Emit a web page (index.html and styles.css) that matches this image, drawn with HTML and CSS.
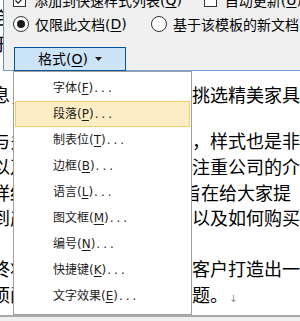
FILE: index.html
```html
<!DOCTYPE html>
<html lang="zh-CN">
<head>
<meta charset="utf-8">
<title>样式修改</title>
<link rel="stylesheet" href="styles.css">
</head>
<body>
<div class="page">
  <div class="doc">
    <div class="line"><span class="l">会，多家</span><span class="r">品牌资料介绍</span></div>
    <div class="line"><span class="l">于，家居</span><span class="r">设计风格介绍</span></div>
    <div class="line"></div>
    <div class="line"><span class="l">息，为您</span><span class="r">挑选精美家具</span></div>
    <div class="line gap"></div>
    <div class="line"><span class="l">与多家厂</span><span class="r">，样式也是非</span></div>
    <div class="line"><span class="l">以及更加</span><span class="r">注重公司的介</span></div>
    <div class="line"><span class="l">详细介绍</span><span class="r r-cut">旨在给大家提</span></div>
    <div class="line"><span class="l">到产品的</span><span class="r">以及如何购买</span></div>
    <div class="line"></div>
    <div class="line"><span class="l">终将为每</span><span class="r">客户打造出一</span></div>
    <div class="line"><span class="l">项问题等</span><span class="r">题。<span class="pmark">↓</span></span></div>
  </div>

  <div class="dialog">
    <div class="row row1">
      <label class="opt opt-a"><span class="cb"><svg viewBox="0 0 13 13" width="13" height="13"><path d="M2.5 6.5 L5.2 9.2 L10.5 3.4" fill="none" stroke="#1a1a1a" stroke-width="1.2"/></svg></span>添加到快速样式列表(<u>Q</u>)</label>
      <label class="opt"><span class="cb"></span>自动更新(<u>U</u>)</label>
    </div>
    <div class="row row2">
      <label class="opt opt-b"><span class="radio on"></span>仅限此文档(<u>D</u>)</label>
      <label class="opt"><span class="radio"></span>基于该模板的新文档</label>
    </div>
    <div class="row row3">
      <button class="fmt">格式(<u>O</u>)<svg class="caret" viewBox="0 0 7 4" width="7" height="4"><path d="M0 0 H7 L3.5 4 Z" fill="#1a1a1a"/></svg></button>
    </div>
  </div>

  <div class="menu">
    <div class="item">字体(<u>F</u>)<span class="dots">...</span></div>
    <div class="item hover">段落(<u>P</u>)<span class="dots">...</span></div>
    <div class="item">制表位(<u>T</u>)<span class="dots">...</span></div>
    <div class="item">边框(<u>B</u>)<span class="dots">...</span></div>
    <div class="item">语言(<u>L</u>)<span class="dots">...</span></div>
    <div class="item">图文框(<u>M</u>)<span class="dots">...</span></div>
    <div class="item">编号(<u>N</u>)<span class="dots">...</span></div>
    <div class="item">快捷键(<u>K</u>)<span class="dots">...</span></div>
    <div class="item">文字效果(<u>E</u>)<span class="dots">...</span></div>
  </div>

  <div class="status"></div>
</div>
</body>
</html>
```

FILE: styles.css
```css
html, body {
  margin: 0;
  padding: 0;
}
body {
  background: #ffffff;
}
.page {
  position: relative;
  width: 300px;
  height: 321px;
  overflow: hidden;
  background: #ffffff;
  font-family: "DejaVu Sans", "Noto Sans CJK SC", sans-serif;
}

/* document behind */
.doc {
  padding-top: 5px;
  color: #000;
  font-size: 18px;
  font-family: "Noto Sans CJK SC", sans-serif;
}
.line {
  display: grid;
  grid-template-columns: 192px 1fr;
  height: 25.6px;
  line-height: 25.6px;
  white-space: nowrap;
}
.line.gap {
  height: 21px;
}
.l {
  margin-left: -8px;
}
.r-cut {
  margin-left: -9px;
}
.pmark {
  color: #8c8c8c;
  font-size: 10px;
  margin-left: 1px;
  font-family: "DejaVu Sans", sans-serif;
}

/* dialog */
.dialog {
  position: absolute;
  top: 0;
  left: 3px;
  right: -2px;
  height: 71px;
  background: #f0f0f0;
  border-left: 1px solid #6d8fb3;
  border-bottom: 1px solid #6fa2d6;
  padding-left: 9px;
  box-sizing: border-box;
  font-size: 14px;
  color: #000;
  display: flex;
  flex-direction: column;
}
.row {
  display: flex;
  align-items: center;
  white-space: nowrap;
}
.row1 {
  height: 14px;
  margin-top: -7px;
}
.row2 {
  height: 20px;
  margin-top: 7px;
}
.row3 {
  margin-top: 13px;
}
.opt {
  display: flex;
  align-items: center;
}
.opt-a {
  width: 199px;
}
.opt-b {
  width: 138px;
}
.cb {
  width: 13px;
  height: 13px;
  box-sizing: border-box;
  border: 1px solid #333;
  background: #fff;
  margin-right: 8px;
  display: flex;
  align-items: center;
  justify-content: center;
}
.cb svg {
  display: block;
  flex: none;
}
.radio {
  width: 16px;
  height: 16px;
  box-sizing: border-box;
  border: 1px solid #333;
  border-radius: 50%;
  background: #fff;
  margin-right: 6px;
  display: flex;
  align-items: center;
  justify-content: center;
}
.radio.on::after {
  content: "";
  width: 8px;
  height: 8px;
  border-radius: 50%;
  background: #1a1a1a;
}
u {
  text-decoration: underline;
  text-underline-offset: 2px;
  text-decoration-thickness: 1px;
}
.fmt {
  margin-left: 1px;
  width: 112px;
  height: 24px;
  box-sizing: border-box;
  background: #cce4f7;
  border: 1px solid #005499;
  font-family: inherit;
  font-size: 14px;
  color: #000;
  padding: 0;
  display: flex;
  align-items: center;
  justify-content: center;
  line-height: 1;
}
.caret {
  margin-left: 7px;
  display: block;
}

/* dropdown menu */
.menu {
  position: absolute;
  top: 71px;
  left: 13px;
  width: 179px;
  height: 244px;
  box-sizing: border-box;
  background: #fff;
  border: 1px solid #a0a0a0;
  padding: 3px 1px;
  font-size: 12px;
  color: #1c1c1c;
  z-index: 2;
}
.item {
  height: 26px;
  line-height: 26px;
  padding-left: 38px;
  box-sizing: border-box;
  white-space: nowrap;
}
.item.hover {
  background: #fdedc4;
  border: 1px solid #f3cd6a;
  line-height: 24px;
  padding-left: 37px;
}
.dots {
  letter-spacing: 3px;
  margin-left: 1px;
}

/* status bar */
.status {
  position: absolute;
  left: 0;
  right: 0;
  bottom: 0;
  height: 6px;
  box-sizing: border-box;
  background: #f0f0f0;
  border-top: 2px solid #a9a9a9;
  z-index: 3;
}
```
